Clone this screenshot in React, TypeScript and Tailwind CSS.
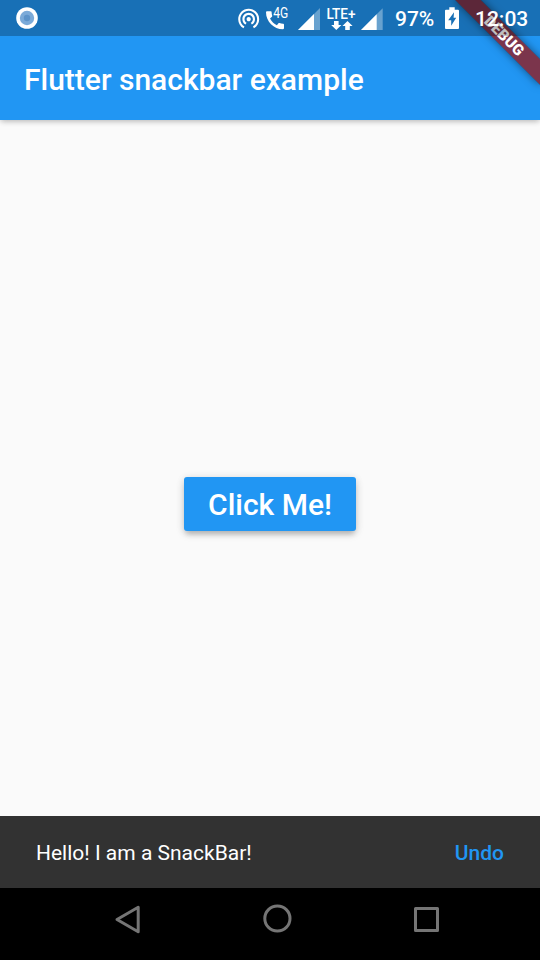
import React from "react";

function StatusBar() {
  return (
    <div className="absolute inset-x-0 top-0 z-20 flex h-9 items-center bg-black/25 text-white">
      <svg className="ml-4 h-9 w-[22px] shrink-0" viewBox="16 0 22 36">
        <circle cx="27" cy="18" r="10.8" fill="#fff" />
        <circle cx="27" cy="18" r="7.2" fill="#7baad8" />
        <circle cx="27" cy="18" r="3.2" fill="#5c93c9" />
      </svg>
      <svg className="ml-[199px] h-9 w-[24px] shrink-0" viewBox="237 0 24 36" fill="#fff">
        <path
          transform="translate(236.1 5.5) scale(1.05)"
          d="M12 11c-1.1 0-2 .9-2 2s.9 2 2 2 2-.9 2-2-.9-2-2-2zm6 2c0-3.31-2.69-6-6-6s-6 2.69-6 6c0 2.22 1.21 4.15 3 5.19l1-1.74c-1.19-.7-2-1.97-2-3.45 0-2.21 1.79-4 4-4s4 1.79 4 4c0 1.48-.81 2.75-2 3.45l1 1.74c1.79-1.04 3-2.97 3-5.19zM12 3C6.48 3 2 7.48 2 13c0 3.7 2.01 6.92 4.99 8.65l1-1.73C5.61 18.53 4 15.96 4 13c0-4.42 3.58-8 8-8s8 3.58 8 8c0 2.96-1.61 5.53-4 6.92l1 1.73c2.99-1.73 5-4.95 5-8.65 0-5.52-4.48-10-10-10z"
        />
      </svg>
      <svg className="h-9 w-[33px] shrink-0" viewBox="261 0 33 36" fill="#fff">
        <path
          transform="translate(263 8.3)"
          d="M20.01 15.38c-1.23 0-2.42-.2-3.53-.56-.35-.12-.74-.03-1.01.24l-1.57 1.97c-2.83-1.35-5.48-3.9-6.89-6.83l1.95-1.66c.27-.28.35-.67.24-1.02-.37-1.11-.56-2.3-.56-3.53 0-.54-.45-.99-.99-.99H4.19C3.65 3 3 3.24 3 3.99 3 13.28 10.73 21 20.01 21c.71 0 .99-.63.99-1.18v-3.45c0-.54-.45-.99-.99-.99z"
        />
        <text x="273.2" y="18" fontSize="14" textLength="15" lengthAdjust="spacingAndGlyphs">
          4G
        </text>
      </svg>
      <svg className="h-9 w-[30px] shrink-0" viewBox="294 0 30 36" fill="#fff">
        <path d="M298 30L320 8V30Z" opacity=".35" />
        <path d="M298 30L314 14V30Z" />
      </svg>
      <svg className="h-9 w-[34px] shrink-0" viewBox="324 0 34 36" fill="#fff">
        <text
          x="326.4"
          y="19.2"
          fontSize="15"
          fontWeight="500"
          textLength="29.2"
          lengthAdjust="spacingAndGlyphs"
        >
          LTE+
        </text>
        <path d="M334 21h4.6v4h2.8l-5.1 5-5.1-5h2.8z" />
        <path d="M345.2 30h4.6v-4h2.8l-5.1-5-5.1 5h2.8z" />
      </svg>
      <svg className="h-9 w-[28px] shrink-0" viewBox="358 0 28 36" fill="#fff">
        <path d="M361 30L382.7 8.3V30Z" opacity=".35" />
        <path d="M361 30L376.7 14.3V30Z" />
      </svg>
      <span className="ml-[9px] w-[40px] whitespace-nowrap pt-0.5 text-[21px] font-medium leading-9">97%</span>
      <svg className="ml-[9px] h-9 w-[16px] shrink-0" viewBox="444 0 16 36">
        <path
          fill="#fff"
          fillRule="evenodd"
          d="M449.3 7.3h5.4v2.4h3.3a1 1 0 0 1 1 1V28a1 1 0 0 1-1 1h-12a1 1 0 0 1-1-1V10.7a1 1 0 0 1 1-1h3.3zM454 12.3L448.2 20.3h3v5.4l5-8h-2.6z"
        />
      </svg>
      <span className="ml-[15px] whitespace-nowrap pt-0.5 text-[21px] font-medium leading-9">12:03</span>
    </div>
  );
}

function DebugBanner() {
  return (
    <div className="absolute right-[-24px] top-[27px] z-10 h-[18px] w-[120px] rotate-45 bg-black/35 shadow-[0_0_9px_rgba(0,0,0,0.5)]">
      <div className="h-full bg-[#b71c1c]/63 text-center text-[15.3px] font-black leading-[18px] text-white">
        DEBUG
      </div>
    </div>
  );
}

function NavigationBar() {
  return (
    <nav className="flex h-[72px] bg-black">
      <svg className="ml-[108px] h-[72px] w-10" viewBox="108 888 40 72" fill="none" stroke="#757575" strokeWidth="3" strokeLinejoin="round">
        <path d="M117 919.5L138.2 907.3V931.7Z" />
      </svg>
      <svg className="ml-[109px] h-[72px] w-10" viewBox="257 888 40 72" fill="none" stroke="#757575" strokeWidth="3">
        <circle cx="277.4" cy="918.5" r="12.6" />
      </svg>
      <svg className="ml-[109px] h-[72px] w-10" viewBox="406 888 40 72" fill="none" stroke="#757575" strokeWidth="3" strokeLinejoin="round">
        <rect x="415.5" y="908.5" width="22" height="22" />
      </svg>
    </nav>
  );
}

export default function App() {
  return (
    <div className="relative flex h-[960px] w-[540px] flex-col overflow-hidden bg-[#fafafa] font-['Roboto',sans-serif]">
      <StatusBar />
      <DebugBanner />
      <header className="flex h-[120px] shrink-0 items-center bg-[#2196f3] pl-6 pt-[39px] text-white shadow-[0_2px_6px_-1px_rgba(0,0,0,0.2),0_1px_6px_rgba(0,0,0,0.12)]">
        <h1 className="whitespace-nowrap text-[30px] font-medium leading-9">Flutter snackbar example</h1>
      </header>
      <main className="flex flex-1 justify-center pt-[357px]">
        <button className="flex h-[54px] w-[172px] items-center justify-center rounded-[3px] bg-[#2196f3] pt-[2px] text-[30px] font-medium leading-9 text-white shadow-[0_5px_5px_-2px_rgba(0,0,0,0.16),0_3px_8px_rgba(0,0,0,0.14),0_1px_9px_rgba(0,0,0,0.08)]">
          Click Me!
        </button>
      </main>
      <div className="flex h-[72px] items-center justify-between bg-[#323232] px-9 pt-[3px] text-[21px]">
        <span className="text-white">Hello! I am a SnackBar!</span>
        <button className="font-medium text-[#2196f3]">Undo</button>
      </div>
      <NavigationBar />
    </div>
  );
}
